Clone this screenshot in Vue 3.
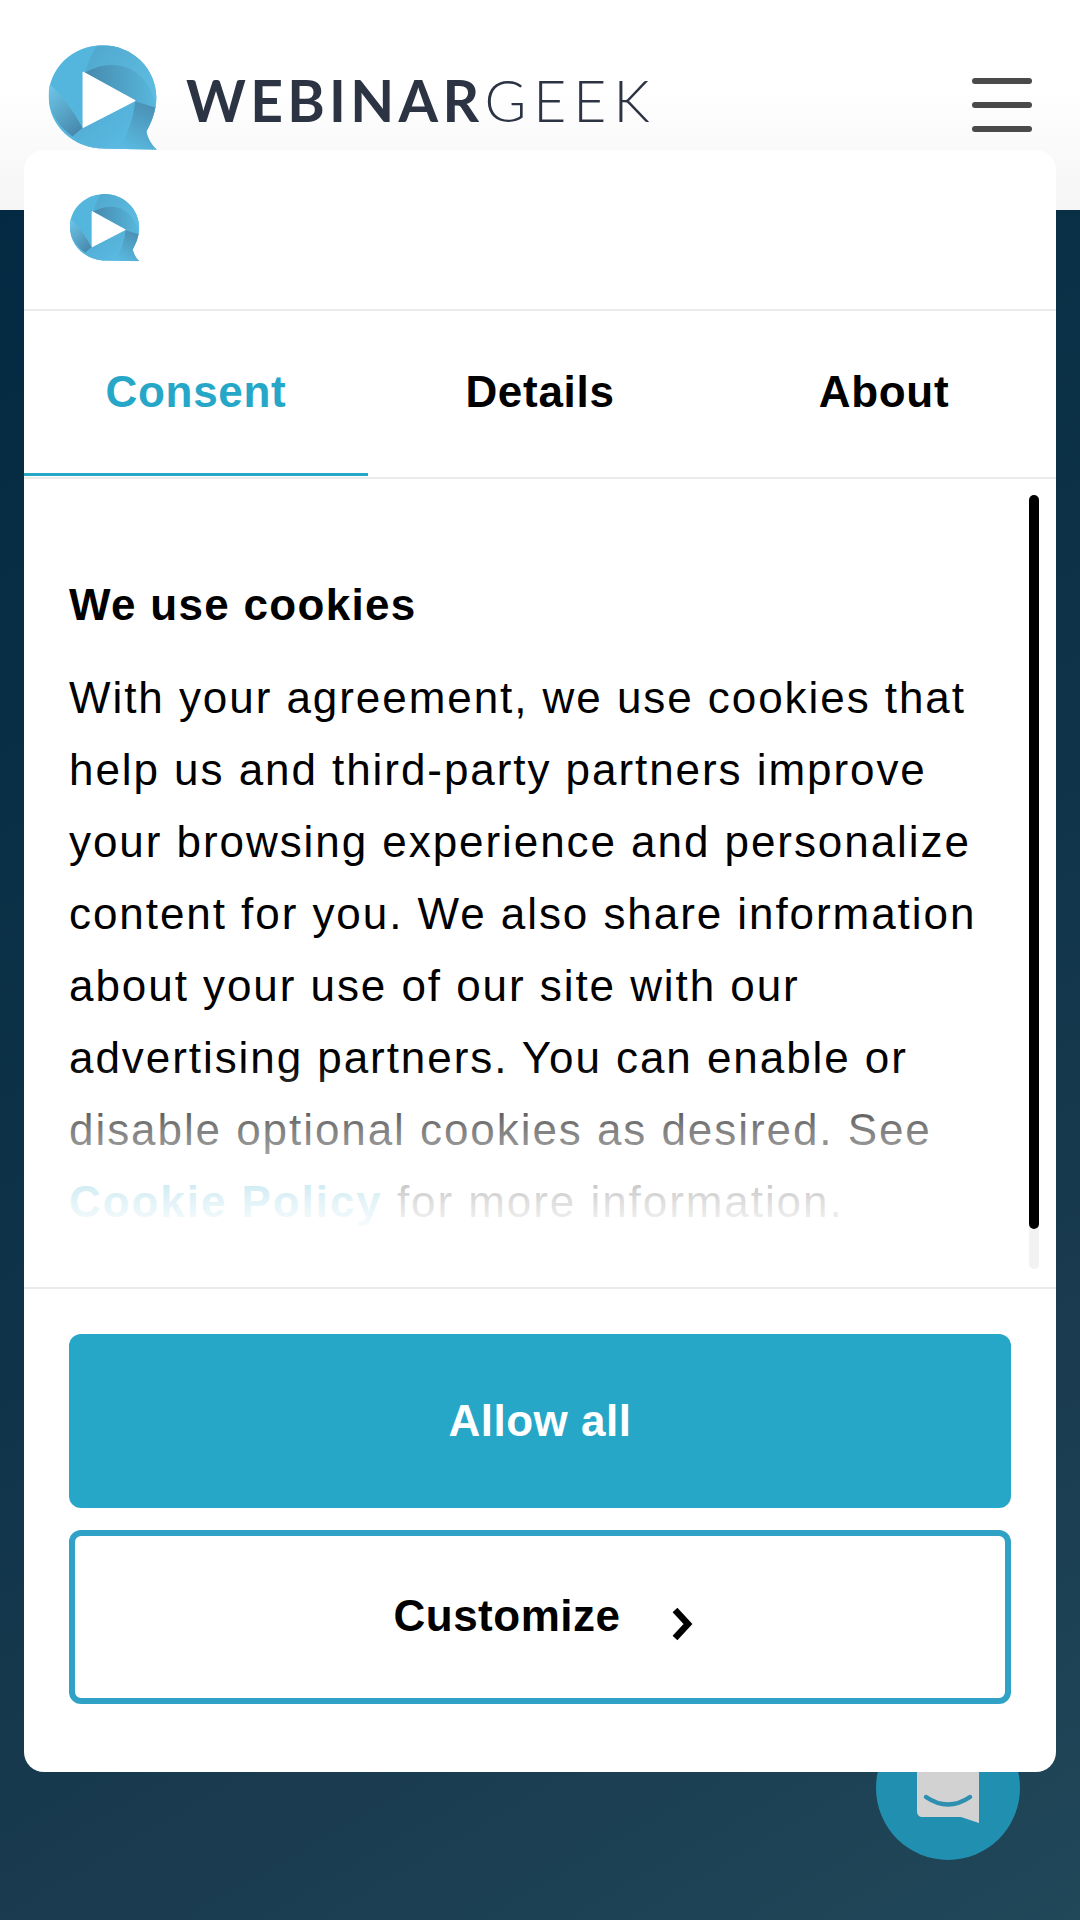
<script setup>
const tabs = ['Consent', 'Details', 'About']
</script>

<template>
  <div class="page">
    <header class="topbar">
      <div class="brand">
        <svg class="brand__mark" viewBox="48 15 340 318">
          <defs>
            <linearGradient id="bladeTop" x1="0" y1="0" x2="1" y2="0">
              <stop offset="0" stop-color="#4689ad" />
              <stop offset="1" stop-color="#58b8de" />
            </linearGradient>
            <linearGradient id="bladeCap" x1="0" y1="0" x2="1" y2="0.6">
              <stop offset="0" stop-color="#4fa6cc" />
              <stop offset="1" stop-color="#5fbde2" />
            </linearGradient>
            <linearGradient id="bladeLeft" x1="0.2" y1="0" x2="0.8" y2="1">
              <stop offset="0" stop-color="#6cc4e6" />
              <stop offset="1" stop-color="#4687ab" />
            </linearGradient>
            <linearGradient id="bladeTail" x1="0.7" y1="0" x2="0.3" y2="1">
              <stop offset="0" stop-color="#4a8fb3" />
              <stop offset="1" stop-color="#5abbe2" />
            </linearGradient>
            <linearGradient id="bladeLow" x1="0" y1="0" x2="1" y2="1">
              <stop offset="0" stop-color="#4fa8d0" />
              <stop offset="1" stop-color="#5cbde4" />
            </linearGradient>
            <clipPath id="markShape">
              <path d="M218 15C308 15 380 86 380 172C380 215 364 250 350 275C354 296 366 316 382 330L222 326C132 326 56 258 56 170C56 84 128 15 218 15Z" />
            </clipPath>
            <symbol id="mark" viewBox="48 15 340 318">
              <g clip-path="url(#markShape)">
                <rect x="40" y="0" width="360" height="340" fill="#55b6dd" />
                <path d="M205 10L400 10L400 205L378 190C350 90 260 50 165 97C175 65 188 35 205 10Z" fill="url(#bladeCap)" />
                <path d="M165 97C260 45 360 85 380 205L315 182Z" fill="url(#bladeTop)" />
                <path d="M52 130C90 155 125 205 158 264L128 290C85 260 50 210 52 130Z" fill="url(#bladeLeft)" />
                <path d="M158 264L318 186C310 240 292 290 262 335L170 335C150 320 140 305 128 290Z" fill="url(#bladeLow)" />
                <path d="M316 184L385 205L352 275L385 335L262 335C292 290 310 240 316 184Z" fill="url(#bladeTail)" />
              </g>
              <path d="M160 97L315 182L160 262Z" fill="#fff" stroke="#fff" stroke-width="4" stroke-linejoin="round" />
            </symbol>
          </defs>
          <use href="#mark" x="48" y="15" width="340" height="318" />
        </svg>
        <span class="brand__name"><b>WEBINAR</b><span class="brand__light">GEEK</span></span>
      </div>
      <div class="burger">
        <span></span>
        <span></span>
        <span></span>
      </div>
    </header>
    <main class="backdrop"></main>

    <div class="chat">
      <svg viewBox="0 0 144 144" width="144" height="144">
        <path d="M41 0H103V107L85 101H47C43 101 41 99 41 95Z" fill="#d2d2d2" />
        <path d="M50 81Q72 96 94 81" fill="none" stroke="#2f8fb0" stroke-width="4.5" stroke-linecap="round" />
      </svg>
    </div>

    <section class="dialog">
      <div class="dialog__logo">
        <svg class="dialog__mark" viewBox="48 15 340 318">
          <use href="#mark" x="48" y="15" width="340" height="318" />
        </svg>
      </div>
      <nav class="tabs">
        <div
          v-for="(tab, i) in tabs"
          :key="tab"
          class="tabs__item"
          :class="{ 'tabs__item--active': i === 0 }"
        >
          {{ tab }}
        </div>
      </nav>
      <div class="content">
        <div class="content__inner">
          <h2 class="content__title">We use cookies</h2>
          <p class="content__text">
            With your agreement, we use cookies that help us and third-party partners improve your browsing experience and personalize content for you. We also share information about your use of our site with our advertising partners. You can enable or disable optional cookies as desired. See <a class="content__link">Cookie Policy</a> for more information.
          </p>
        </div>
        <div class="content__fade"></div>
        <div class="scrollbar"><div class="scrollbar__thumb"></div></div>
      </div>
      <div class="actions">
        <button class="btn btn--primary">Allow all</button>
        <button class="btn btn--outline">
          <span>Customize</span>
          <svg class="btn__chevron" viewBox="0 0 24 34" width="24" height="34">
            <path d="M5 3L18 17L5 31" fill="none" stroke="#000" stroke-width="6.5" />
          </svg>
        </button>
      </div>
    </section>
  </div>
</template>

<style>
html, body {
  margin: 0;
  padding: 0;
}
</style>

<style scoped>
.page {
  position: relative;
  width: 1080px;
  height: 1920px;
  overflow: hidden;
  display: flex;
  flex-direction: column;
  font-family: "Liberation Sans", Arial, sans-serif;
}

.topbar {
  height: 210px;
  box-sizing: border-box;
  padding: 45px 48px 0 46px;
  display: flex;
  justify-content: space-between;
  align-items: flex-start;
  background: linear-gradient(180deg, #ffffff 0%, #ffffff 40%, #f5f5f6 100%);
}

.brand {
  display: flex;
  align-items: flex-start;
  gap: 27px;
}

.brand__mark {
  width: 113px;
  height: 106px;
  display: block;
}

.brand__name {
  font-family: Lato, sans-serif;
  font-weight: 300;
  font-size: 57px;
  line-height: 68px;
  margin-top: 21px;
  color: #2c3444;
}

.brand__name b {
  font-weight: 700;
  letter-spacing: 4.3px;
}

.brand__light {
  margin-left: 1px;
  letter-spacing: 7px;
}

.burger {
  width: 60px;
  margin-top: 33px;
  display: flex;
  flex-direction: column;
  gap: 18px;
}

.burger span {
  display: block;
  height: 6px;
  border-radius: 3px;
  background: #4a4a4a;
}

.backdrop {
  flex: 1;
  background: linear-gradient(150deg, #032a42 0%, #0f3449 50%, #1a3b50 75%, #204859 100%);
}

.chat {
  position: absolute;
  left: 876px;
  top: 1716px;
  width: 144px;
  height: 144px;
  border-radius: 50%;
  background: #2190b0;
  overflow: hidden;
}

.chat svg {
  display: block;
}

.dialog {
  position: absolute;
  left: 24px;
  top: 150px;
  width: 1032px;
  height: 1622px;
  background: #fff;
  border-radius: 20px;
  display: flex;
  flex-direction: column;
  overflow: hidden;
}

.dialog__logo {
  height: 161px;
  box-sizing: border-box;
  padding: 44px 44px 0;
  border-bottom: 2px solid #ebebeb;
}

.dialog__mark {
  width: 73px;
  height: 68px;
  display: block;
}

.tabs {
  display: flex;
  height: 166px;
  border-bottom: 2px solid #ebebeb;
}

.tabs__item {
  flex: 1;
  display: flex;
  align-items: center;
  justify-content: center;
  font-size: 44px;
  font-weight: 700;
  letter-spacing: 0.7px;
  color: #000;
  height: 165px;
  box-sizing: border-box;
  border-bottom: 3px solid transparent;
}

.tabs__item--active {
  color: #26a7c7;
  border-bottom-color: #26a7c7;
}

.content {
  position: relative;
  height: 808px;
  overflow: hidden;
  border-bottom: 2px solid #ebebeb;
}

.content__inner {
  padding: 101px 45px 0;
}

.content__title {
  margin: 0 0 32px;
  font-size: 44px;
  line-height: 50px;
  font-weight: 700;
  letter-spacing: 1.3px;
  color: #000;
}

.content__text {
  margin: 0;
  font-size: 44px;
  line-height: 72px;
  letter-spacing: 1.94px;
  color: #000;
}

.content__link {
  color: #26a7c7;
  font-weight: 700;
}

.content__fade {
  position: absolute;
  left: 0;
  right: 0;
  bottom: 0;
  height: 225px;
  background: linear-gradient(
    180deg,
    rgba(255, 255, 255, 0) 0%,
    rgba(255, 255, 255, 0.5) 30%,
    rgba(255, 255, 255, 0.87) 62%,
    rgba(255, 255, 255, 1) 78%
  );
}

.scrollbar {
  position: absolute;
  right: 17px;
  top: 16px;
  bottom: 18px;
  width: 10px;
  border-radius: 5px;
  background: #f2f2f2;
}

.scrollbar__thumb {
  height: 734px;
  border-radius: 5px;
  background: #000;
}

.actions {
  flex: 1;
  padding: 45px 45px 0;
  display: flex;
  flex-direction: column;
  gap: 22px;
}

.btn {
  height: 174px;
  box-sizing: border-box;
  border-radius: 12px;
  font-family: inherit;
  font-size: 44px;
  font-weight: 700;
  letter-spacing: 0.5px;
  display: flex;
  align-items: center;
  justify-content: center;
  padding: 0;
}

.btn--primary {
  border: 0;
  background: #26a7c7;
  color: #fff;
}

.btn--outline {
  border: 6px solid #2fa2c6;
  background: #fff;
  color: #000;
  padding: 0 0 2px 8px;
}

.btn__chevron {
  margin-left: 50px;
  margin-top: 16px;
}
</style>
